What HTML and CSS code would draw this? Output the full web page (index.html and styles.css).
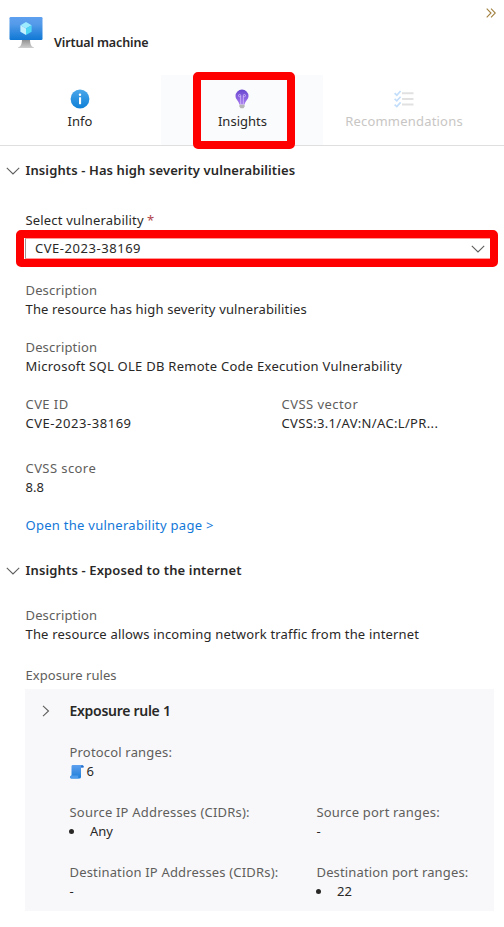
FILE: index.html
```
<!DOCTYPE html>
<html lang="en">
<head>
<meta charset="utf-8">
<title>Virtual machine</title>
<link rel="stylesheet" href="styles.css">
</head>
<body>
<main class="panel">
  <header class="header">
    <svg class="vm-icon" width="34" height="32" viewBox="0 0 34 32">
      <defs>
        <linearGradient id="screen" x1="0" y1="0" x2="0" y2="1"><stop offset="0" stop-color="#5ea0ef"/><stop offset=".3" stop-color="#559bea"/><stop offset="1" stop-color="#0f78d4"/></linearGradient>
        <linearGradient id="stand" x1="0" y1="0" x2="0" y2="1"><stop offset="0" stop-color="#8b8b8b"/><stop offset="1" stop-color="#cfcfcf"/></linearGradient>
      </defs>
      <path d="M13 22h8c0 5 1 7.500 4 8.500v.5H9v-.5c3-1 4-3.500 4-8.500z" fill="url(#stand)"/>
      <rect x=".5" y="0" width="33" height="23" rx="1.200" fill="url(#screen)"/>
      <path d="M17 5l5.600 3.200-5.600 3.300-5.600-3.300z" fill="#9cebff"/>
      <path d="M11.400 8.200l5.600 3.300V18l-5.600-3.200z" fill="#c3f1ff"/>
      <path d="M22.600 8.200L17 11.500V18l5.600-3.200z" fill="#50d6f5"/>
    </svg>
    <h1 class="title">Virtual machine</h1>
    <svg class="collapse" width="10" height="10" viewBox="0 0 10 10"><path d="M.7.7L5 5 .7 9.300M5 .7L9.300 5 5 9.300" fill="none" stroke="#a1803f" stroke-width="1.100"/></svg>
  </header>

  <nav class="tabs">
    <div class="tab">
      <svg width="20" height="20" viewBox="0 0 20 20">
        <defs><linearGradient id="info" x1="0" y1="0" x2="0" y2="1"><stop offset="0" stop-color="#4ba7ea"/><stop offset="1" stop-color="#0f80d7"/></linearGradient></defs>
        <circle cx="10" cy="10" r="9.400" fill="url(#info)"/><circle cx="10" cy="5.800" r="1.200" fill="#fff"/><rect x="9" y="8.200" width="2.100" height="7" rx=".4" fill="#fff"/>
      </svg>
      <span class="tab-info">Info</span>
    </div>
    <div class="tab selected">
      <svg width="20" height="20" viewBox="0 0 20 20">
        <defs><linearGradient id="bulb" x1="0" y1="0" x2="0" y2="1"><stop offset="0" stop-color="#6847cf"/><stop offset="1" stop-color="#a77aef"/></linearGradient></defs>
        <path d="M10 .5a6.500 6.500 0 0 0-6.500 6.500c0 3.700 3.500 4.900 3.800 8.500h5.400c.3-3.600 3.800-4.800 3.800-8.500A6.500 6.500 0 0 0 10 .5z" fill="url(#bulb)"/>
        <path d="M8.700 15V7.500M11.300 15V7.500M8.700 7.700H7.500a1.100 1.100 0 1 1 1.200-1.100zM11.300 7.700h1.200a1.100 1.100 0 1 0-1.200-1.100z" fill="none" stroke="#d6c3f8" stroke-width=".8"/>
        <path d="M7.400 15.800h5.200v2l-1.200 1.400H8.600l-1.200-1.400z" fill="#b5b5b8"/>
      </svg>
      <span class="tab-insights">Insights</span>
      <i class="mark mark-tab"></i>
    </div>
    <div class="tab disabled">
      <svg width="20" height="20" viewBox="0 0 20 20">
        <path d="M8 4.200h11.500M8 9.900h11.500M8 15.600h11.500" stroke="#e1e1e1" stroke-width="2"/>
        <path d="M.6 4.200l2.200 2L6.600 2M.6 9.900l2.200 2 3.800-4.200M.6 15.600l2.200 2 3.800-4.200" fill="none" stroke="#c3defa" stroke-width="1.700"/>
      </svg>
      <span class="tab-rec">Recommendations</span>
    </div>
  </nav>

  <section class="vulnerabilities">
    <h2 class="heading"><svg class="chevron" width="14" height="8" viewBox="0 0 14 8"><path d="M.8.8L7 7 13.200.8" /></svg><span class="w-high">Insights - Has high severity vulnerabilities</span></h2>
    <div class="body">
      <div class="select-label"><span class="w-select">Select vulnerability</span> <b class="required">*</b></div>
      <div class="select"><span class="w-cve">CVE-2023-38169</span><svg class="chevron" width="14" height="8" viewBox="0 0 14 8"><path d="M.8.8L7 7 13.200.8" /></svg><i class="mark mark-select"></i></div>
      <dl class="field"><dt><span class="w-desc">Description</span></dt><dd><span class="w-sev">The resource has high severity vulnerabilities</span></dd></dl>
      <dl class="field"><dt><span class="w-desc">Description</span></dt><dd><span class="w-sql">Microsoft SQL OLE DB Remote Code Execution Vulnerability</span></dd></dl>
      <div class="pair">
        <dl class="field"><dt><span class="w-id">CVE ID</span></dt><dd><span class="w-cve">CVE-2023-38169</span></dd></dl>
        <dl class="field"><dt><span class="w-vector">CVSS vector</span></dt><dd><span class="w-av">CVSS:3.1/AV:N/AC:L/PR...</span></dd></dl>
      </div>
      <dl class="field score"><dt><span class="w-score">CVSS score</span></dt><dd>8.8</dd></dl>
      <a class="link"><span class="w-link">Open the vulnerability page &gt;</span></a>
    </div>
  </section>

  <section class="exposure">
    <h2 class="heading"><svg class="chevron" width="14" height="8" viewBox="0 0 14 8"><path d="M.8.8L7 7 13.200.8" /></svg><span class="w-exposed">Insights - Exposed to the internet</span></h2>
    <div class="body">
      <dl class="field"><dt><span class="w-desc">Description</span></dt><dd><span class="w-allows">The resource allows incoming network traffic from the internet</span></dd></dl>
      <div class="rules-label"><span class="w-rules">Exposure rules</span></div>
      <div class="rule">
        <h3 class="rule-title"><svg class="chevron" width="8" height="12" viewBox="0 0 8 12"><path d="M1 .8L6.500 6 1 11.200" /></svg><span class="w-rule">Exposure rule 1</span></h3>
        <div class="grid">
          <dl class="field wide"><dt><span class="w-protocol">Protocol ranges:</span></dt><dd class="protocol">
            <svg width="14" height="15" viewBox="0 0 14 15">
              <defs><linearGradient id="scroll" x1="0" y1="0" x2="0" y2="1"><stop offset="0" stop-color="#5ea0ef"/><stop offset="1" stop-color="#1b7dd8"/></linearGradient></defs>
              <path d="M2.500 1h9.300a1.700 1.700 0 0 1 1.700 1.700v.8H11V13a1.600 1.600 0 0 1-1.600 1.500H1.600A1.500 1.500 0 0 1 1.600 11.500H1.500V2.200A1.200 1.200 0 0 1 2.500 1z" fill="url(#scroll)"/>
              <path d="M11 3.500V2.300A1.300 1.300 0 0 1 13.500 2.300v1.200z" fill="#2b72cb"/><path d="M.2 13a1.500 1.500 0 0 1 1.500-1.500h6.500v1.700a1.300 1.300 0 0 0 1.200 1.300H1.700A1.500 1.500 0 0 1 .2 13z" fill="#4c9bec"/>
            </svg>6</dd></dl>
          <dl class="field"><dt><span class="w-srcip">Source IP Addresses (CIDRs):</span></dt><dd class="item">Any</dd></dl>
          <dl class="field"><dt><span class="w-srcport">Source port ranges:</span></dt><dd>-</dd></dl>
          <dl class="field"><dt><span class="w-dstip">Destination IP Addresses (CIDRs):</span></dt><dd>-</dd></dl>
          <dl class="field"><dt><span class="w-dstport">Destination port ranges:</span></dt><dd class="item">22</dd></dl>
        </div>
      </div>
    </div>
  </section>
</main>
</body>
</html>
```
FILE: styles.css
```
* { box-sizing: border-box; }
body { margin: 0; background: #fff; color: #292827; font: 13px/19px "Noto Sans", "Open Sans", sans-serif; }
h1, h2, h3, dl, dd { margin: 0; font-size: 13px; }
h1, h2, h3 { font-weight: 600; }
svg { display: block; flex: none; }
span { white-space: nowrap; }

.header { display: flex; height: 75px; padding: 17px 8px 0 9px; }
.title { margin: 16px 0 0 11px; font-size: 12.500px; letter-spacing: -.13px; white-space: nowrap; }
.collapse { margin: -9px 0 0 auto; }

.tabs { display: flex; height: 71px; border-bottom: 1px solid #dfdfdf; }
.tab { position: relative; display: flex; flex-direction: column; align-items: center; width: 162px; padding-top: 14px; }
.tab:first-child { width: 159px; margin-right: 2px; }
.tab span { margin-top: 3px; }
.tab .tab-info { margin-left: 1px; }
.tab .tab-insights { margin-left: 1px; }
.selected { background: #fafbfd; }
.disabled { color: #c8c6c4; }

.mark { position: absolute; border: 8px solid #f00; border-radius: 5px; }
.mark-tab { left: 32px; top: -3px; width: 102px; height: 77px; }
.mark-select { left: -10px; top: -9px; width: 482px; height: 37px; }

.heading { display: flex; align-items: center; gap: 6px; height: 19px; padding-left: 6px; }
.heading span { margin-left: -.5px; }
.chevron path { fill: none; stroke: #5f5e5d; stroke-width: 1.100; }
.vulnerabilities { padding-top: 15px; }
.body { padding: 0 10px 0 25.500px; }
.select-label { margin-top: 31px; height: 19px; white-space: nowrap; }
.required { color: #b0434a; font-weight: 400; }
.select { position: relative; display: flex; align-items: center; justify-content: space-between; height: 21px; margin: 8px 0 22px -.5px; padding: 0 8px 0 9px; border: 1px solid #ff9a98; border-left-color: #a09490; }
.field { margin-bottom: 19px; }
dt { color: #605e5c; }
.pair { display: grid; grid-template-columns: 256px 1fr; }
.score { margin-top: 7px; }
.link { display: block; color: #1277d8; }

.exposure { padding-top: 26px; }
.exposure .body { padding-top: 26px; }
.rules-label { margin-top: 22px; color: #605e5c; }
.rule { margin: 4px 0 0 -.5px; height: 222px; padding: 12px 0 0 17px; background: #f8f8fa; }
.rule-title { display: flex; align-items: center; gap: 19.500px; font-size: 14px; }
.grid { display: grid; grid-template-columns: 247px 1fr; row-gap: 3px; margin: 23px 0 0 27.500px; }
.wide { grid-column: 1 / -1; }
.protocol { display: flex; align-items: center; gap: 3px; }
.item { display: flex; align-items: center; }
.item::before { content: ""; width: 5px; height: 5px; margin: 0 16px 0 -.5px; border-radius: 50%; background: #292827; }

/* Tracking per label */
.tab-rec { letter-spacing: .2px; }
.tab-insights { letter-spacing: .02px; }
.w-high { letter-spacing: .11px; }
.w-exposed { letter-spacing: .14px; }
.w-select { letter-spacing: .18px; }
.w-cve { letter-spacing: .54px; }
.w-desc { letter-spacing: .15px; }
.w-sev { letter-spacing: .15px; }
.w-sql { letter-spacing: .26px; }
.w-id, .w-score { letter-spacing: .42px; }
.w-vector { letter-spacing: .45px; }
.w-av { letter-spacing: .34px; }
.w-link { letter-spacing: .27px; }
.w-allows { letter-spacing: .18px; }
.w-rules { letter-spacing: .05px; }
.w-rule { letter-spacing: -.28px; }
.w-srcip { letter-spacing: .2px; }
.w-dstip { letter-spacing: .17px; }
.w-protocol, .w-srcport { letter-spacing: .18px; }
.w-dstport { letter-spacing: .14px; }
```
